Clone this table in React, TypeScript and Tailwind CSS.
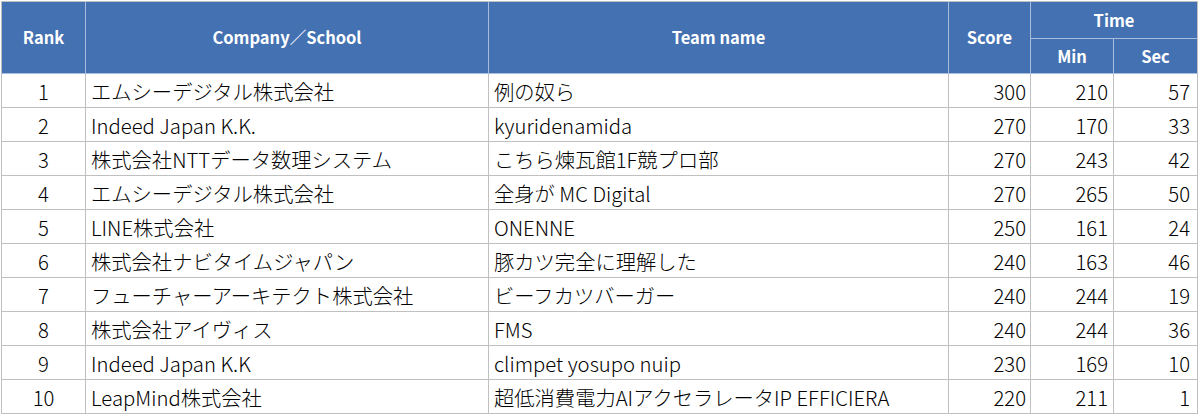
import React from "react";

type Row = {
  rank: number;
  company: string;
  team: string;
  score: number;
  min: number;
  sec: number;
};

const rows: Row[] = [
  { rank: 1, company: "エムシーデジタル株式会社", team: "例の奴ら", score: 300, min: 210, sec: 57 },
  { rank: 2, company: "Indeed Japan K.K.", team: "kyuridenamida", score: 270, min: 170, sec: 33 },
  { rank: 3, company: "株式会社NTTデータ数理システム", team: "こちら煉瓦館1F競プロ部", score: 270, min: 243, sec: 42 },
  { rank: 4, company: "エムシーデジタル株式会社", team: "全身が MC Digital", score: 270, min: 265, sec: 50 },
  { rank: 5, company: "LINE株式会社", team: "ONENNE", score: 250, min: 161, sec: 24 },
  { rank: 6, company: "株式会社ナビタイムジャパン", team: "豚カツ完全に理解した", score: 240, min: 163, sec: 46 },
  { rank: 7, company: "フューチャーアーキテクト株式会社", team: "ビーフカツバーガー", score: 240, min: 244, sec: 19 },
  { rank: 8, company: "株式会社アイヴィス", team: "FMS", score: 240, min: 244, sec: 36 },
  { rank: 9, company: "Indeed Japan K.K", team: "climpet yosupo nuip", score: 230, min: 169, sec: 10 },
  { rank: 10, company: "LeapMind株式会社", team: "超低消費電力AIアクセラレータIP EFFICIERA", score: 220, min: 211, sec: 1 },
];

const font = "font-['Noto_Sans_CJK_JP','Noto_Sans',sans-serif]";

const App = () => {
  return (
    <div className={`w-[1200px] h-[417px] bg-white pl-px pt-px ${font}`}>
      <table className="table-fixed border-collapse w-[1196px]">
        <colgroup>
          <col className="w-[84px]" />
          <col className="w-[403px]" />
          <col className="w-[460px]" />
          <col className="w-[82px]" />
          <col className="w-[83px]" />
          <col className="w-[84px]" />
        </colgroup>
        {/* header */}
        <thead className="bg-[#4371b2] text-white font-bold text-[16.5px]">
          <tr className="h-[37px]">
            <th rowSpan={2} className="border border-[#a9bcdc] border-l-[#c0c0c0] border-t-[#c0c0c0]">
              Rank
            </th>
            <th rowSpan={2} className="border border-[#a9bcdc] border-t-[#c0c0c0]">
              Company／School
            </th>
            <th rowSpan={2} className="border border-[#a9bcdc] border-t-[#c0c0c0]">
              Team name
            </th>
            <th rowSpan={2} className="border border-[#a9bcdc] border-t-[#c0c0c0]">
              Score
            </th>
            <th colSpan={2} className="border border-[#a9bcdc] border-t-[#c0c0c0] border-r-[#c0c0c0]">
              Time
            </th>
          </tr>
          <tr className="h-[35px]">
            <th className="border border-[#a9bcdc]">Min</th>
            <th className="border border-[#a9bcdc] border-r-[#c0c0c0]">Sec</th>
          </tr>
        </thead>
        {/* ranking rows */}
        <tbody className="text-[20.3px] text-black font-light">
          {rows.map((r) => (
            <tr key={r.rank} className="h-[34px]">
              <td className="border border-[#c0c0c0] text-center leading-none pt-[2px]">{r.rank}</td>
              <td className="border border-[#c0c0c0] pl-[5px] leading-none pt-[2px] whitespace-nowrap">{r.company}</td>
              <td className="border border-[#c0c0c0] pl-[5px] leading-none pt-[2px] whitespace-nowrap">{r.team}</td>
              <td className="border border-[#c0c0c0] text-right pr-[4px] leading-none pt-[2px]">{r.score}</td>
              <td className="border border-[#c0c0c0] text-right pr-[5px] leading-none pt-[2px]">{r.min}</td>
              <td className="border border-[#c0c0c0] text-right pr-[7px] leading-none pt-[2px]">{r.sec}</td>
            </tr>
          ))}
        </tbody>
      </table>
    </div>
  );
};

export default App;
